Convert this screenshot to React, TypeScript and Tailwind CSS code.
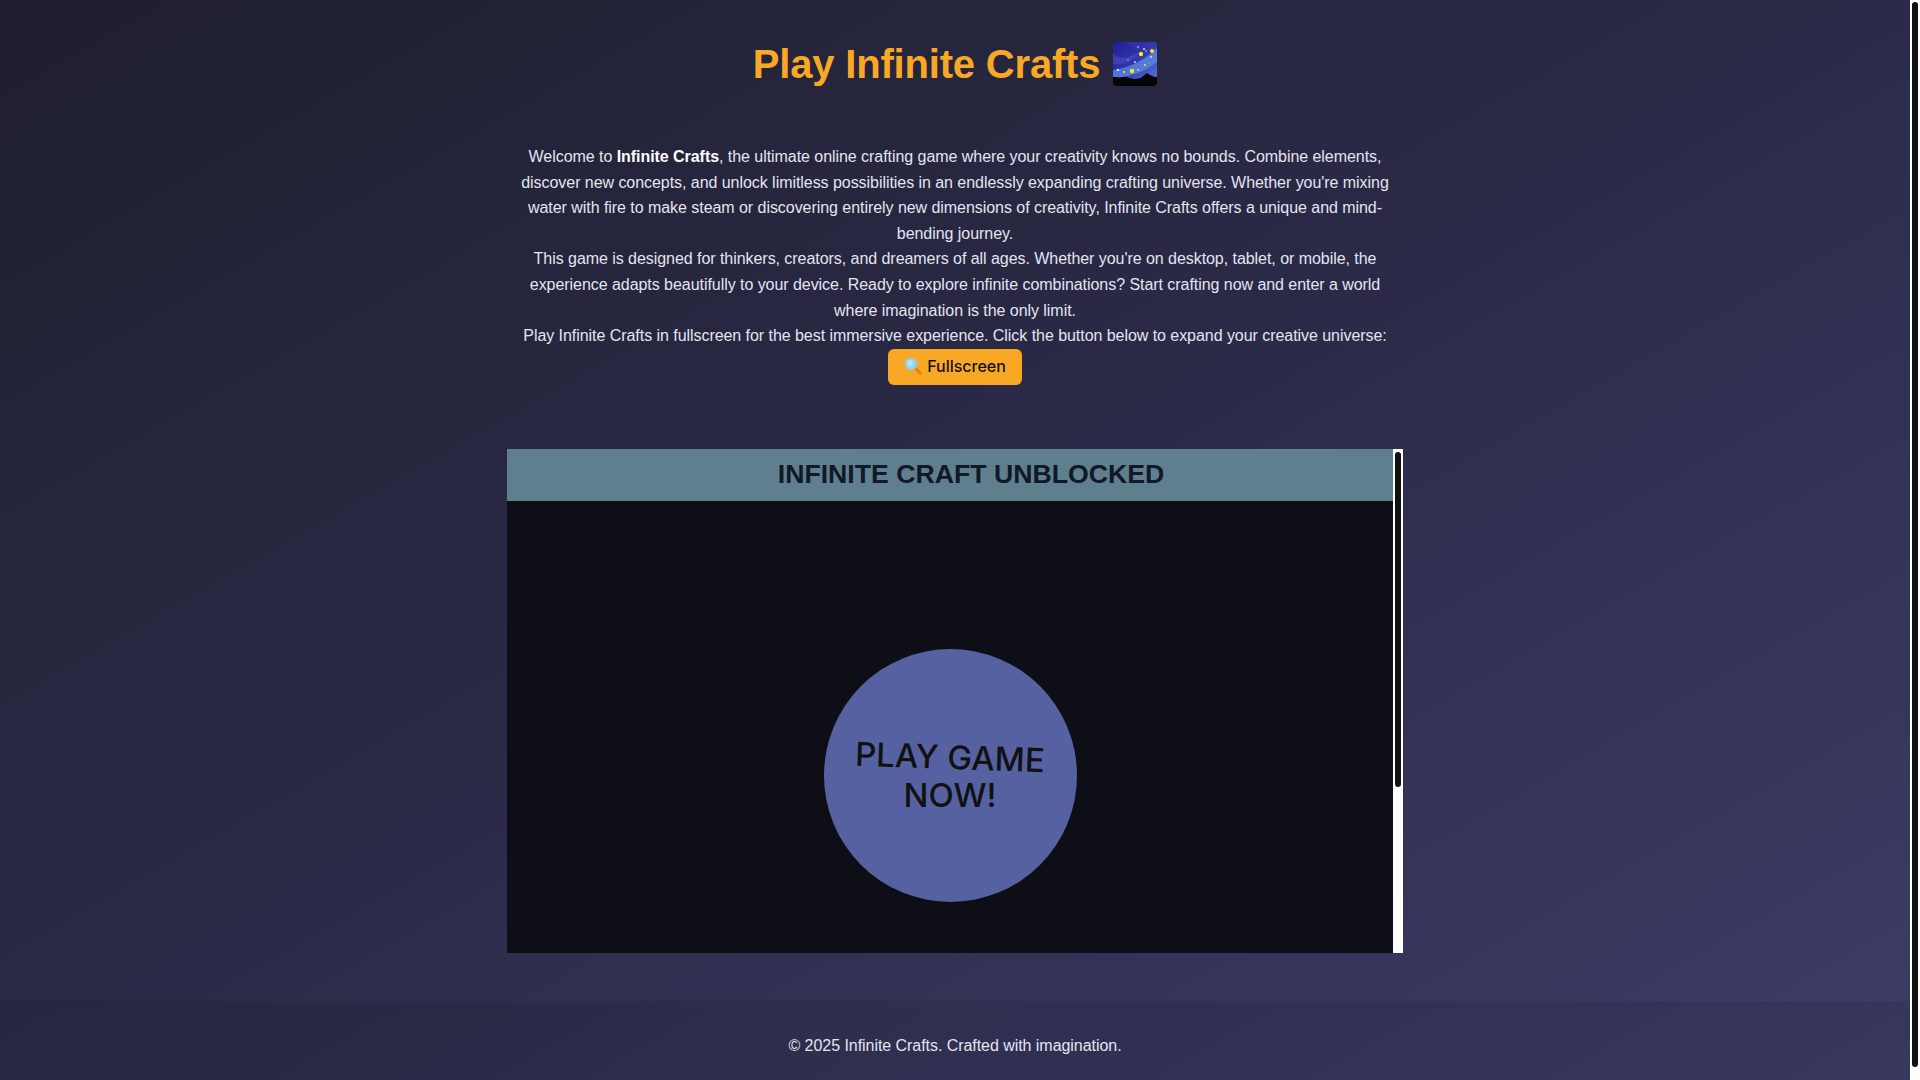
import React from "react";

function Scrollbar({ thumbClass }: { thumbClass: string }) {
  return (
    <div className="w-[10px] shrink-0 bg-white px-[2px]">
      <div className={`${thumbClass} bg-[#111111] rounded-[3px]`} />
    </div>
  );
}

function GalaxyIcon() {
  return (
    <svg width="44" height="44" viewBox="0 0 44 44" className="inline-block align-[-8px] ml-[2px]">
      <defs>
        <linearGradient id="sky" x1="0" y1="0" x2="1" y2="1">
          <stop offset="0" stopColor="#1f2090" />
          <stop offset="0.5" stopColor="#3238b0" />
          <stop offset="1" stopColor="#5a7fe0" />
        </linearGradient>
      </defs>
      <rect width="44" height="44" rx="3" fill="url(#sky)" />
      <path d="M0 28 C16 26 32 18 44 6 V20 C32 30 14 36 0 36Z" fill="#5f8ae6" opacity="0.75" />
      <path d="M0 12 C8 18 18 16 26 10 C20 20 8 24 0 22Z" fill="#4448bc" opacity="0.7" />
      <path d="M14 0 C18 6 26 8 34 0Z" fill="#3034a8" opacity="0.7" />
      <path d="M0 44 V35 C4 35 6 36 10 35 C14 34 16 37 22 37 C28 37 30 34 34 31 C37 33 40 35 44 35 V41 Q44 44 41 44 H3 Q0 44 0 41Z" fill="#050505" />
      <g fill="#ffe61a">
        <circle cx="28" cy="12" r="2.2" />
        <circle cx="39" cy="9" r="2" />
        <circle cx="19" cy="29" r="2.2" />
        <circle cx="31" cy="7" r="1" />
        <circle cx="32" cy="23" r="1" />
        <circle cx="11" cy="30" r="1" />
        <circle cx="25" cy="28" r="0.9" />
      </g>
      <g fill="#a8e8ff">
        <circle cx="5" cy="28" r="1.3" />
        <circle cx="38" cy="15" r="1.1" />
        <circle cx="22" cy="20" r="0.9" />
        <circle cx="33" cy="9" r="0.8" />
      </g>
      <g fill="#8a80e0">
        <circle cx="25" cy="5" r="1.2" />
        <circle cx="15" cy="18" r="0.9" />
        <circle cx="36" cy="21" r="1" />
      </g>
    </svg>
  );
}

function MagnifierIcon() {
  return (
    <svg width="18" height="18" viewBox="0 0 18 18" className="inline-block align-[-3px] mr-[5px]">
      <path d="M10.5 10.5 L16 16" stroke="#f57c00" strokeWidth="3" strokeLinecap="round" />
      <circle cx="7" cy="7" r="5.8" fill="#90d4f7" stroke="#b0bec5" strokeWidth="1.2" />
      <circle cx="6" cy="6" r="3" fill="#b3e5fc" />
    </svg>
  );
}

export default function App() {
  return (
    <div className="flex h-screen overflow-hidden font-['Liberation_Sans',Arial,sans-serif] text-[#e4e4f0]">
      <div className="flex-1 min-w-0 self-start bg-[linear-gradient(to_bottom_right,#1e1e2f_0%,#2b2b49_50%,#3d3d68_100%)]">
        <header className="pt-[32px] text-center">
          <h1 className="text-[40px] leading-[64px] tracking-[-0.18px] font-bold text-[#f9a825]">
            Play Infinite Crafts <GalaxyIcon />
          </h1>
        </header>
        <section className="w-[896px] mx-auto mt-[48px] text-center text-[16px] leading-[25.6px] tracking-[-0.05px]">
          <p>
            Welcome to <strong className="text-white">Infinite Crafts</strong>, the ultimate online crafting game where your creativity knows no bounds. Combine elements, discover new concepts, and unlock limitless possibilities in an endlessly expanding crafting universe. Whether you're mixing water with fire to make steam or discovering entirely new dimensions of creativity, Infinite Crafts offers a unique and mind-bending journey.
          </p>
          <p>
            This game is designed for thinkers, creators, and dreamers of all ages. Whether you're on desktop, tablet, or mobile, the experience adapts beautifully to your device. Ready to explore infinite combinations? Start crafting now and enter a world where imagination is the only limit.
          </p>
          <p>Play Infinite Crafts in fullscreen for the best immersive experience. Click the button below to expand your creative universe:</p>
          <button className="h-[36px] w-[134px] rounded-[6px] bg-[#f9a825] text-[#111111] text-[16px] tracking-normal font-medium font-['Inter',sans-serif]">
            <MagnifierIcon />Fullscreen
          </button>
        </section>
        <main className="flex w-[896px] h-[504px] mx-auto mt-[64px] overflow-hidden">
          <div className="flex-1 min-w-0">
            <div className="h-[52px] bg-[#5f7f8f] pl-[42px] text-center text-[26.67px] leading-[50px] font-bold text-[#111827]">
              INFINITE CRAFT UNBLOCKED
            </div>
            <div className="h-[452px] bg-[#0d0e16] pt-[148px] flex justify-center">
              <div className="w-[253px] h-[253px] rounded-full bg-[#5561a0] flex flex-col items-center pt-[89px] text-[#111] font-['Inter',sans-serif] font-medium text-[33px] leading-[38px]">
                <span className="rotate-[2deg]">PLAY GAME</span>
                <span>NOW!</span>
              </div>
            </div>
          </div>
          <div className="flex pt-[3px] bg-white">
            <Scrollbar thumbClass="h-[335px]" />
          </div>
        </main>
        <footer className="mt-[48px] h-[90px] bg-[#00000014] flex items-center justify-center text-[16px] tracking-[-0.05px]">
          © 2025 Infinite Crafts. Crafted with imagination.
        </footer>
      </div>
      <div className="flex pt-[2px] bg-white">
        <Scrollbar thumbClass="h-[1065px]" />
      </div>
    </div>
  );
}
